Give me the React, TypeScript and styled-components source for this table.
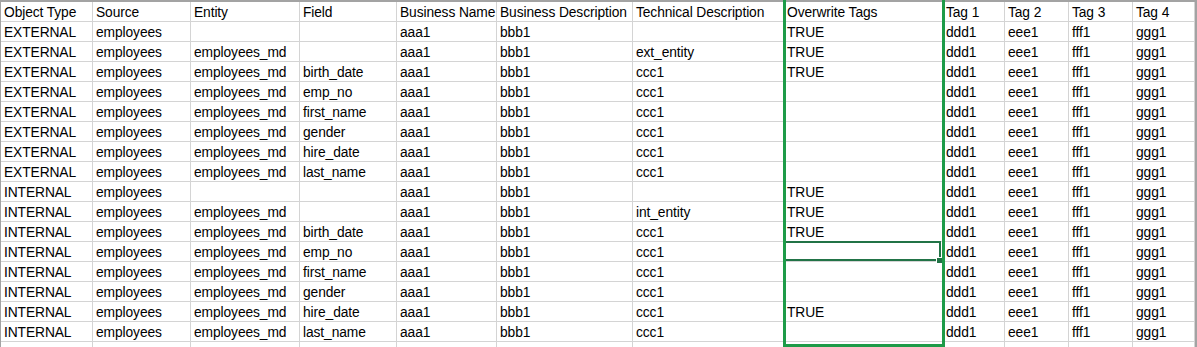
import React from 'react';
import styled, { createGlobalStyle } from 'styled-components';

const GlobalStyle = createGlobalStyle`
  html, body {
    margin: 0;
    padding: 0;
    background: #ffffff;
  }
  body {
    font-family: "Liberation Sans", Arial, sans-serif;
    overflow: hidden;
  }
`;

const COLUMN_WIDTHS = [92, 98, 109, 97, 100, 136, 151, 159, 62, 64, 64, 62];
const SELECTED_COL = 7;
const ACTIVE_ROW = 11;

const HEADERS = [
  'Object Type',
  'Source',
  'Entity',
  'Field',
  'Business Name',
  'Business Description',
  'Technical Description',
  'Overwrite Tags',
  'Tag 1',
  'Tag 2',
  'Tag 3',
  'Tag 4',
];

const FIELDS = ['birth_date', 'emp_no', 'first_name', 'gender', 'hire_date', 'last_name'];

type RowData = string[];

const buildRows = (kind: string, entityDesc: string, tagged: string[]): RowData[] => {
  const tail = ['ddd1', 'eee1', 'fff1', 'ggg1'];
  const rows: RowData[] = [
    [kind, 'employees', '', '', 'aaa1', 'bbb1', '', 'TRUE', ...tail],
    [kind, 'employees', 'employees_md', '', 'aaa1', 'bbb1', entityDesc, 'TRUE', ...tail],
  ];
  FIELDS.forEach((f) => {
    rows.push([
      kind,
      'employees',
      'employees_md',
      f,
      'aaa1',
      'bbb1',
      'ccc1',
      tagged.includes(f) ? 'TRUE' : '',
      ...tail,
    ]);
  });
  return rows;
};

const ROWS: RowData[] = [
  ...buildRows('EXTERNAL', 'ext_entity', ['birth_date']),
  ...buildRows('INTERNAL', 'int_entity', ['birth_date', 'hire_date']),
];

const Page = styled.div`
  position: relative;
  width: 1197px;
  height: 347px;
  overflow: hidden;
`;

const Sheet = styled.div<{ $cols: string }>`
  display: grid;
  grid-template-columns: ${(p) => p.$cols};
  grid-auto-rows: 20px;
  border-top: 2px solid #a3a3a3;
  border-left: 1px solid #a3a3a3;
  border-right: 2px solid #a3a3a3;
  width: max-content;
`;

const Cell = styled.div<{ $active?: boolean }>`
  position: relative;
  box-sizing: border-box;
  height: 20px;
  border-right: 1px solid #d4d4d4;
  border-bottom: 1px solid #d4d4d4;
  padding: 0 1px 0 3px;
  display: flex;
  align-items: flex-end;
  font-size: 13.8px;
  letter-spacing: -0.1px;
  line-height: 16px;
  color: #000000;
  white-space: nowrap;
  overflow: ${(p) => (p.$active ? 'visible' : 'hidden')};

  ${(p) =>
    p.$active &&
    `
    z-index: 2;
    &::after {
      content: '';
      position: absolute;
      top: -1px;
      left: 0;
      right: 1px;
      bottom: 0;
      border: 2px solid #217346;
    }
  `}
`;

const FillHandle = styled.span`
  position: absolute;
  right: -1px;
  bottom: -3px;
  width: 5px;
  height: 5px;
  background: #217346;
  border: 1px solid #ffffff;
  z-index: 3;
`;

const ColumnSelection = styled.div<{ $left: number; $width: number }>`
  position: absolute;
  top: 0;
  left: ${(p) => p.$left}px;
  width: ${(p) => p.$width}px;
  height: 347px;
  box-sizing: border-box;
  border-left: 3px solid #1e9b48;
  border-right: 3px solid #1e9b48;
  border-bottom: 3px solid #1e9b48;
  pointer-events: none;
  z-index: 4;
`;

export default function App() {
  const cols = COLUMN_WIDTHS.map((w) => `${w}px`).join(' ');
  const selLeft = 1 + COLUMN_WIDTHS.slice(0, SELECTED_COL).reduce((a, b) => a + b, 0) - 1;
  const selWidth = COLUMN_WIDTHS[SELECTED_COL] + 3;
  const blankRow = HEADERS.map(() => '');

  return (
    <Page>
      <GlobalStyle />
      <Sheet $cols={cols}>
        {HEADERS.map((h, i) => (
          <Cell key={`h-${i}`}>{h}</Cell>
        ))}
        {ROWS.map((row, r) =>
          row.map((value, c) => {
            const active = r === ACTIVE_ROW && c === SELECTED_COL;
            return (
              <Cell key={`${r}-${c}`} $active={active}>
                {value}
                {active && <FillHandle />}
              </Cell>
            );
          })
        )}
        {blankRow.map((_, c) => (
          <Cell key={`blank-${c}`} />
        ))}
      </Sheet>
      <ColumnSelection $left={selLeft} $width={selWidth} />
    </Page>
  );
}
